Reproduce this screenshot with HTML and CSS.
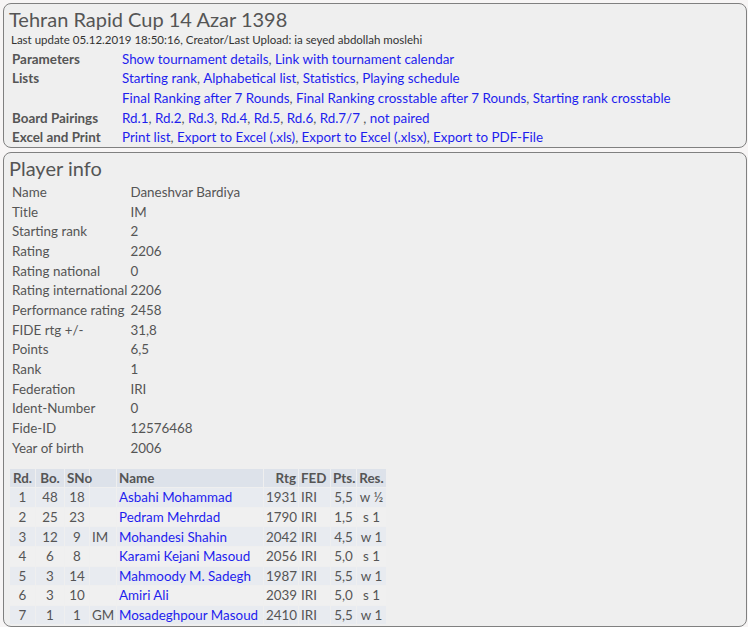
FILE: index.html
```html
<!DOCTYPE html>
<html>
<head>
<meta charset="utf-8">
<link rel="stylesheet" href="styles.css">
</head>
<body>
<div class="box head">
  <h2 class="title">Tehran Rapid Cup 14 Azar 1398</h2>
  <div class="update">Last update 05.12.2019 18:50:16, Creator/Last Upload: ia seyed abdollah moslehi</div>
  <table class="menu">
    <tr><th>Parameters</th><td><a>Show tournament details</a>, <a>Link with tournament calendar</a></td></tr>
    <tr><th>Lists</th><td><a>Starting rank</a>, <a>Alphabetical list</a>, <a>Statistics</a>, <a>Playing schedule</a></td></tr>
    <tr><th></th><td><a>Final Ranking after 7 Rounds</a>, <a>Final Ranking crosstable after 7 Rounds</a>, <a>Starting rank crosstable</a></td></tr>
    <tr><th>Board Pairings</th><td><a>Rd.1</a>, <a>Rd.2</a>, <a>Rd.3</a>, <a>Rd.4</a>, <a>Rd.5</a>, <a>Rd.6</a>, <a>Rd.7/7</a> , <a>not paired</a></td></tr>
    <tr><th>Excel and Print</th><td><a>Print list</a>, <a>Export to Excel (.xls)</a>, <a>Export to Excel (.xlsx)</a>, <a>Export to PDF-File</a></td></tr>
  </table>
</div>
<div class="box player">
  <h2 class="title">Player info</h2>
  <table class="info">
    <tr><td>Name</td><td>Daneshvar Bardiya</td></tr>
    <tr><td>Title</td><td>IM</td></tr>
    <tr><td>Starting rank</td><td>2</td></tr>
    <tr><td>Rating</td><td>2206</td></tr>
    <tr><td>Rating national</td><td>0</td></tr>
    <tr><td>Rating international</td><td>2206</td></tr>
    <tr><td>Performance rating</td><td>2458</td></tr>
    <tr><td>FIDE rtg +/-</td><td>31,8</td></tr>
    <tr><td>Points</td><td>6,5</td></tr>
    <tr><td>Rank</td><td>1</td></tr>
    <tr><td>Federation</td><td>IRI</td></tr>
    <tr><td>Ident-Number</td><td>0</td></tr>
    <tr><td>Fide-ID</td><td>12576468</td></tr>
    <tr><td>Year of birth</td><td>2006</td></tr>
  </table>
  <table class="games">
    <tr class="hd"><th class="c w-rd">Rd.</th><th class="c w-bo">Bo.</th><th class="c w-sno">SNo</th><th class="w-ti"></th><th class="l w-name">Name</th><th class="r w-rtg">Rtg</th><th class="l w-fed">FED</th><th class="c w-pts">Pts.</th><th class="c w-res">Res.</th></tr>
    <tr class="o"><td class="c">1</td><td class="c">48</td><td class="c">18</td><td></td><td class="l"><a>Asbahi Mohammad</a></td><td class="r">1931</td><td class="l">IRI</td><td class="c">5,5</td><td class="c">w ½</td></tr>
    <tr class="e"><td class="c">2</td><td class="c">25</td><td class="c">23</td><td></td><td class="l"><a>Pedram Mehrdad</a></td><td class="r">1790</td><td class="l">IRI</td><td class="c">1,5</td><td class="c">s 1</td></tr>
    <tr class="o"><td class="c">3</td><td class="c">12</td><td class="c">9</td><td>IM</td><td class="l"><a>Mohandesi Shahin</a></td><td class="r">2042</td><td class="l">IRI</td><td class="c">4,5</td><td class="c">w 1</td></tr>
    <tr class="e"><td class="c">4</td><td class="c">6</td><td class="c">8</td><td></td><td class="l"><a>Karami Kejani Masoud</a></td><td class="r">2056</td><td class="l">IRI</td><td class="c">5,0</td><td class="c">s 1</td></tr>
    <tr class="o"><td class="c">5</td><td class="c">3</td><td class="c">14</td><td></td><td class="l"><a>Mahmoody M. Sadegh</a></td><td class="r">1987</td><td class="l">IRI</td><td class="c">5,5</td><td class="c">w 1</td></tr>
    <tr class="e"><td class="c">6</td><td class="c">3</td><td class="c">10</td><td></td><td class="l"><a>Amiri Ali</a></td><td class="r">2039</td><td class="l">IRI</td><td class="c">5,0</td><td class="c">s 1</td></tr>
    <tr class="o"><td class="c">7</td><td class="c">1</td><td class="c">1</td><td>GM</td><td class="l"><a>Mosadeghpour Masoud</a></td><td class="r">2410</td><td class="l">IRI</td><td class="c">5,5</td><td class="c">w 1</td></tr>
  </table>
</div>
</body>
</html>
```
FILE: styles.css
```css
html, body { margin: 0; padding: 0; }
body {
  background: #f7f5f5;
  font-family: "Lato", "Open Sans", sans-serif;
  font-size: 13.4px;
  color: #555;
  padding: 3px 1px 0 3px;
}
.box {
  background: #efefef;
  border: 1px solid #808080;
  border-radius: 8px;
  padding: 3px 5px 0 5px;
}
.head { margin-bottom: 4px; }
.player { height: 470px; }
.title {
  margin: 0;
  font-size: 20px;
  font-weight: normal;
  color: #555;
  line-height: 24px;
}
.update {
  font-size: 11.5px;
  color: #333;
  line-height: 18px;
  margin-left: 2px;
}
a { color: #1e1eee; text-decoration: none; }
table { border-collapse: collapse; }
.menu th {
  text-align: left;
  font-weight: bold;
  color: #555;
  padding: 0 3px;
  width: 104px;
  height: 19.6px;
  line-height: 16px;
  white-space: nowrap;
}
.menu td { padding: 0 3px; height: 19.6px; line-height: 16px; white-space: nowrap; }
.info { margin-top: 2px; }
.info td { padding: 0 2px 0 3px; height: 19.7px; line-height: 16px; white-space: nowrap; }
.info td:first-child { width: 112px; padding-right: 0; }
.games {
  margin-top: 10px;
  border-collapse: separate;
  border-spacing: 1px;
  table-layout: fixed;
  width: 378px;
}
.games th, .games td { padding: 0 2px; height: 18.6px; line-height: 16px; white-space: nowrap; overflow: visible; }
.games th { font-weight: bold; background: #dde2ea; }
.games .o td { background: #e8ebf0; }
.games .e td { background: #f0f0f0; }
.w-rd { width: 21px; }
.w-bo { width: 24px; }
.w-sno { width: 20px; }
.w-ti { width: 22px; }
.w-name { width: 142px; }
.w-rtg { width: 30px; }
.w-fed { width: 27px; }
.w-pts { width: 21px; }
.w-res { width: 25px; }
.c { text-align: center; }
.l { text-align: left; }
.r { text-align: right; }
```
